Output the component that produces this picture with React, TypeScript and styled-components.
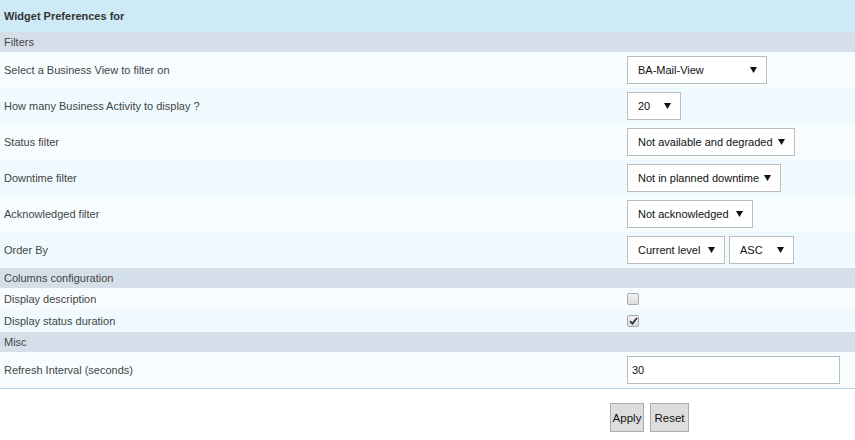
import React from "react";
import styled, { createGlobalStyle } from "styled-components";

const Global = createGlobalStyle`
  html, body { margin: 0; padding: 0; background: #ffffff; }
  body { font-family: "Liberation Sans", Arial, sans-serif; font-size: 11px; color: #444; }
`;

const Page = styled.div`
  width: 855px;
  display: flex;
  flex-direction: column;
`;

const Header = styled.div`
  height: 32px;
  background: #cdeaf6;
  display: flex;
  align-items: center;
  padding-left: 4px;
  font-weight: bold;
  color: #333;
  font-size: 11px;
`;

const Section = styled.div`
  height: 20px;
  background: #d5dfea;
  display: flex;
  align-items: center;
  padding-left: 4px;
  color: #444;
`;

const Row = styled.div<{ $alt?: boolean; $h?: number }>`
  height: ${(p) => p.$h ?? 36}px;
  background: ${(p) => (p.$alt ? "#effafe" : "#f7fdff")};
  display: grid;
  grid-template-columns: 627px 1fr;
  align-items: center;
`;

const Label = styled.div`
  padding-left: 4px;
  color: #444;
`;

const Controls = styled.div`
  display: flex;
  gap: 4px;
  align-items: center;
`;

const SelectBox = styled.div<{ $w: number }>`
  box-sizing: border-box;
  width: ${(p) => p.$w}px;
  height: 28px;
  background: #fff;
  border: 1px solid #bcbcbc;
  display: flex;
  align-items: center;
  justify-content: space-between;
  padding: 0 9px 0 10px;
  color: #111;
  font-size: 11px;
  white-space: nowrap;
`;

const Arrow = styled.svg`
  flex: none;
  margin-left: 2px;
`;

const Check = styled.span<{ $checked?: boolean }>`
  box-sizing: border-box;
  width: 12px;
  height: 12px;
  border: 1px solid #a9a9a9;
  border-radius: 2px;
  background: linear-gradient(#f2f2f2, #dcdcdc);
  display: flex;
  align-items: center;
  justify-content: center;
`;

const TextInput = styled.div`
  box-sizing: border-box;
  width: 213px;
  height: 28px;
  background: #fff;
  border: 1px solid #bcbcbc;
  display: flex;
  align-items: center;
  padding-left: 4px;
  color: #111;
`;

const Divider = styled.div`
  height: 1px;
  background: #bcd6e6;
`;

const Buttons = styled.div`
  display: flex;
  gap: 6px;
  padding: 14px 0 0 610px;
`;

const Button = styled.button<{ $w: number }>`
  box-sizing: border-box;
  width: ${(p) => p.$w}px;
  height: 29px;
  padding: 0;
  background: #dddddd;
  border: 1px solid #ababab;
  font-family: "Liberation Sans", Arial, sans-serif;
  font-size: 11.5px;
  color: #111;
`;

const Select = ({ w, v }: { w: number; v: string }) => (
  <SelectBox $w={w}>
    <span>{v}</span>
    <Arrow width="7" height="6" viewBox="0 0 7 6">
      <path d="M0 0 H7 L3.5 6 Z" fill="#111" />
    </Arrow>
  </SelectBox>
);

export default function App() {
  return (
    <Page>
      <Global />
      <Header>Widget Preferences for</Header>
      <Section>Filters</Section>
      <Row>
        <Label>Select a Business View to filter on</Label>
        <Controls><Select w={140} v="BA-Mail-View" /></Controls>
      </Row>
      <Row $alt>
        <Label>How many Business Activity to display ?</Label>
        <Controls><Select w={54} v="20" /></Controls>
      </Row>
      <Row>
        <Label>Status filter</Label>
        <Controls><Select w={168} v="Not available and degraded" /></Controls>
      </Row>
      <Row $alt>
        <Label>Downtime filter</Label>
        <Controls><Select w={154} v="Not in planned downtime" /></Controls>
      </Row>
      <Row>
        <Label>Acknowledged filter</Label>
        <Controls><Select w={126} v="Not acknowledged" /></Controls>
      </Row>
      <Row $alt>
        <Label>Order By</Label>
        <Controls>
          <Select w={98} v="Current level" />
          <Select w={65} v="ASC" />
        </Controls>
      </Row>
      <Section>Columns configuration</Section>
      <Row $h={22}>
        <Label>Display description</Label>
        <Controls><Check /></Controls>
      </Row>
      <Row $h={22} $alt>
        <Label>Display status duration</Label>
        <Controls>
          <Check $checked>
            <svg width="9" height="8" viewBox="0 0 9 8">
              <path d="M1 4.2 L3.4 6.6 L8 1" stroke="#333" strokeWidth="1.8" fill="none" />
            </svg>
          </Check>
        </Controls>
      </Row>
      <Section>Misc</Section>
      <Row>
        <Label>Refresh Interval (seconds)</Label>
        <Controls><TextInput>30</TextInput></Controls>
      </Row>
      <Divider />
      <Buttons>
        <Button $w={34}>Apply</Button>
        <Button $w={39}>Reset</Button>
      </Buttons>
    </Page>
  );
}
